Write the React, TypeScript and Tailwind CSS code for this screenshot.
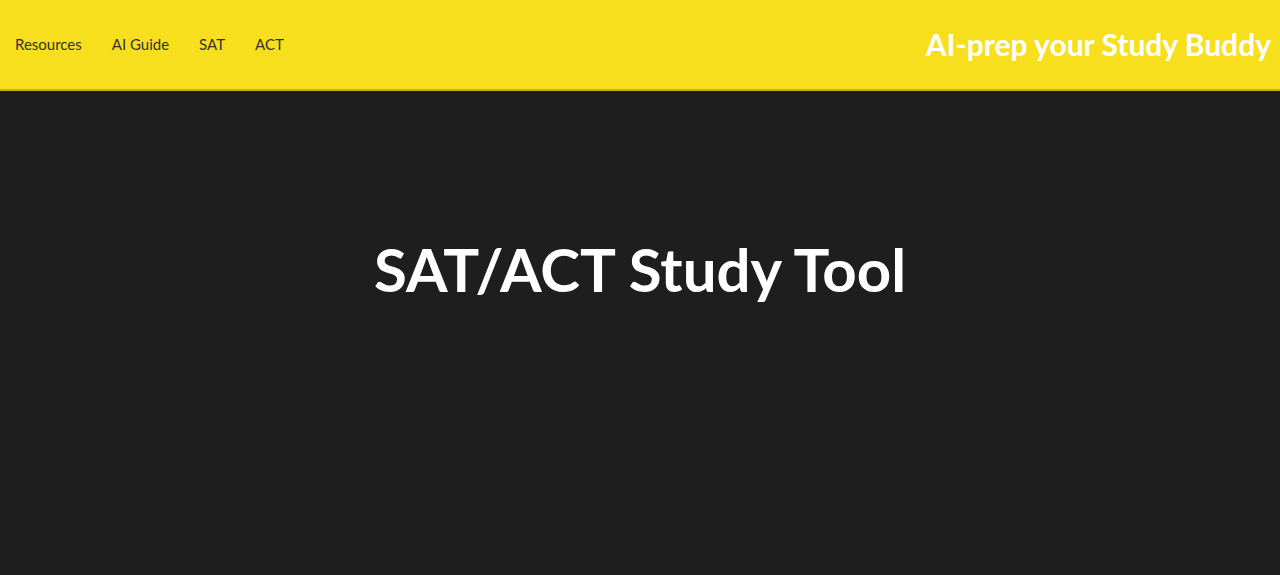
export default function App() {
  const links = ['Resources', 'AI Guide', 'SAT', 'ACT']
  return (
    <div className="min-h-screen bg-[#1e1e1e] font-['Lato',sans-serif]">
      <header className="flex h-[91px] items-center justify-between border-b-2 border-[#c9b51a] bg-[#f7df1e] pl-[15px] pr-[9px]">
        <nav className="flex items-center gap-[30px] text-[15px] text-[#333]">
          {links.map((l) => (
            <a key={l} href="#">{l}</a>
          ))}
        </nav>
        <h2 className="text-[30px] font-bold text-white">AI-prep your Study Buddy</h2>
      </header>
      <main className="flex justify-center pt-[133px]">
        <h1 className="text-[60px] font-bold text-white">SAT/ACT Study Tool</h1>
      </main>
    </div>
  )
}
